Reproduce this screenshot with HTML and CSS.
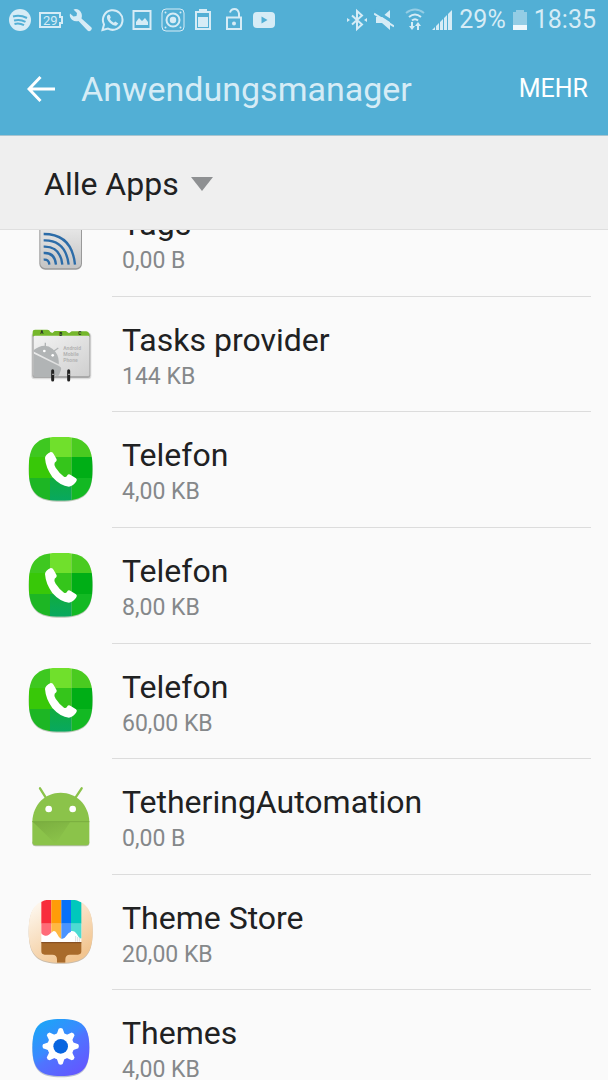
FILE: index.html
```html
<!DOCTYPE html>
<html lang="de">
<head>
<meta charset="utf-8">
<meta name="viewport" content="width=device-width, initial-scale=1">
<title>Anwendungsmanager</title>
<link rel="stylesheet" href="styles.css">
</head>
<body>
<svg width="0" height="0" class="defs" aria-hidden="true">
  <defs>
    <linearGradient id="tag" x2="0" y2="1"><stop offset="0" stop-color="#f4f4f4"/><stop offset="1" stop-color="#c4c4c4"/></linearGradient>
    <linearGradient id="card" x2="1" y2="1"><stop offset="0" stop-color="#f3f3f3"/><stop offset="1" stop-color="#cfcfcf"/></linearGradient>
    <linearGradient id="cream" x2=".6" y2="1"><stop offset="0" stop-color="#fffdf9"/><stop offset="1" stop-color="#f2c590"/></linearGradient>
    <linearGradient id="blue" x2=".7" y2="1"><stop offset="0" stop-color="#14abf5"/><stop offset=".5" stop-color="#3b89ff"/><stop offset=".6" stop-color="#4f74ff"/><stop offset="1" stop-color="#6259ff"/></linearGradient>
    <linearGradient id="teal" x2="0" y2="1"><stop offset="0" stop-color="#10ac40"/><stop offset="1" stop-color="#08a860"/></linearGradient>
    <linearGradient id="fold" x2=".6" y2="1"><stop offset="0" stop-color="#6f9f38"/><stop offset="1" stop-color="#8bc34a"/></linearGradient>
    <path id="squircle" d="M122 26C190 26 218 46 218 122S190 218 122 218 26 198 26 122 54 26 122 26Z"/>
    <clipPath id="clip"><use href="#squircle"/></clipPath>
    <clipPath id="cardclip"><rect x="41" y="60" width="168" height="126" rx="5"/></clipPath>
    <symbol id="phone" viewBox="24 27 198 198">
      <use href="#squircle" y="3" fill="#bcc8b8"/>
      <g clip-path="url(#clip)">
        <path fill="#3ec820" d="M24 24h66v63H24z"/><path fill="#70e02c" d="M90 24h65v63H90z"/><path fill="#4acb20" d="M155 24h65v63h-65z"/>
        <path fill="#38c808" d="M24 87h66v63H24z"/><path fill="#35c51b" d="M90 87h65v63H90z"/><path fill="#00ae16" d="M155 87h65v63h-65z"/>
        <path fill="#1db624" d="M24 150h66v70H24z"/><path fill="url(#teal)" d="M90 150h65v70H90z"/><path fill="#13b923" d="M155 150h65v70h-65z"/>
      </g>
      <path fill="#fff" d="M75 90Q76 80 92 72Q98 71 101 78L110 94Q112 100 104 104Q101 110 107 119Q119 137 132 146Q138 149 141 143Q145 137 151 140L168 151Q173 155 169 160Q160 175 147 176Q121 174 97 147Q77 119 75 90Z"/>
    </symbol>
  </defs>
</svg>

<header class="top">
  <div class="status">
    <div class="notices">
      <svg viewBox="0 0 24 24"><circle cx="12" cy="12" r="11" fill="currentColor"/><path class="cut" d="M5 8.500q7-2 14 1.500M6 12.500q6-1.700 11.500 1.300M6.500 16q5-1.300 9.500 1.200" stroke-width="2"/></svg>
      <svg viewBox="0 0 24 24"><path class="line" d="M1 5h20v4h2v6h-2v4H1z"/><text x="4" y="17" class="tiny">29</text></svg>
      <svg viewBox="0 0 24 24"><path fill="currentColor" d="M22.500 19.500 12.500 10.500Q14 5 10 2 7.500.5 4.500 1.500L8 5 7.500 8 4.500 8.500 1 5.500Q0 9 3 11.800 6 14 9.500 13L18.500 22.500Q20 24 22 22.300 23.500 20.800 22.500 19.500Z"/></svg>
      <svg viewBox="0 0 24 24"><path class="line" d="M2.500 22 4 16.500A9.800 9.800 0 1 1 8 20.600Z"/><path fill="currentColor" d="M8.500 6.500 7 8q-.7 3.500 3 7 3.500 3.200 6.500 2.500l1.800-2-3-2-1.500 1.200q-2.500-1-4-3.700l1-1.200-1-2.800z"/></svg>
      <svg viewBox="0 0 24 24"><rect class="line" x="3.500" y="3" width="17" height="18"/><path fill="currentColor" d="M6 17v-3l3-4 3 3 3-3 3 4v3z"/></svg>
      <svg viewBox="0 0 24 24"><rect class="line thin" x="1" y="1" width="22" height="22" rx="4"/><circle class="line" cx="12" cy="12" r="6.500"/><g fill="currentColor"><circle cx="12" cy="12" r="3.200"/><circle cx="4.500" cy="4.500" r="1"/><circle cx="19.500" cy="4.500" r="1"/><circle cx="4.500" cy="19.500" r="1"/><circle cx="19.500" cy="19.500" r="1"/></g></svg>
      <svg viewBox="0 0 24 24"><path class="line" d="M5 4h14v17H5z"/><path fill="currentColor" d="M8 1h8v3H8zM7 9h10v10H7z"/></svg>
      <svg viewBox="0 0 24 24"><path class="line" d="M5 9.500h14v11.500H5zM8 4.500q1-3.500 4.500-3.500T17 5.500v4"/><circle cx="12" cy="15.500" r="2" fill="currentColor"/></svg>
      <svg viewBox="0 0 24 24"><rect x="1" y="4" width="22" height="16" rx="4" fill="currentColor"/><path fill="#52afd5" d="m9.500 8.500 6 3.500-6 3.500z"/></svg>
    </div>
    <div class="system">
      <svg viewBox="0 0 20 24"><path class="line" d="m5 7.500 10 9-5 4.500V3l5 4.500-10 9"/><path fill="currentColor" d="m0 10 3 2-3 2zm20 0-3 2 3 2z"/></svg>
      <svg viewBox="0 0 20 24"><path fill="currentColor" d="M2 9h6l8-7v20L8 15H2z"/><path d="m1 2.500 20 13" stroke="#52afd5" stroke-width="3"/><path class="line" d="m0 5.500 20 13"/></svg>
      <svg class="wifi" viewBox="0 0 20 24"><path class="line dim" d="M1 5q9-7 18 0"/><path class="line" d="M4 9q6-5 12 0M7 12.500q3-2.500 6 0"/><path fill="currentColor" d="M6 14h2v4h2l-3 4-3-4h2zm6 8v-4h-2l3-4 3 4h-2v4z"/></svg>
      <svg viewBox="0 0 20 24"><path fill="currentColor" d="m0 22 3-3v3zm4-4 3-3v7H4zm4-4 3-3v11H8zm4-4 3-3v15h-3zm4-4 4-4v20h-4z"/></svg>
      <span>29%</span>
      <svg class="battery" viewBox="0 0 14 24"><path fill="currentColor" opacity=".5" d="M0 4h3V2h8v2h3v13H0z"/><path fill="#eff8fc" d="M0 17h14v5H0z"/></svg>
      <time>18:35</time>
    </div>
  </div>
  <div class="bar">
    <button class="back" aria-label="Zurück"><svg viewBox="0 0 28 28"><path d="M13.500 2 2 14l11.500 12M2 14h26" fill="none" stroke="#fff" stroke-width="3"/></svg></button>
    <h1>Anwendungsmanager</h1>
    <button class="more">MEHR</button>
  </div>
</header>

<div class="filter">
  <select aria-label="Filter"><option>Alle Apps</option></select>
  <svg viewBox="0 0 22 14" aria-hidden="true"><path fill="#8e9092" d="M0 0h22L11 14z"/></svg>
</div>

<main>
  <ul class="apps">
    <li>
      <svg viewBox="24 -40 198 198"><rect x="58" y="-20" width="128" height="171" rx="18" fill="#999"/><rect x="61" y="-20" width="122" height="167" rx="15" fill="url(#tag)"/><g fill="none" stroke="#2c6ca8" stroke-width="7"><path d="M71 44Q156 44 165 136M71 63Q137 61 146 136M71 82Q121 80 127 136M71 101Q105 99 108 136M71 121Q87 119 88 136"/></g></svg>
      <div class="text"><h2>Tags</h2><p>0,00 B</p></div>
    </li>
    <li>
      <svg viewBox="24 18 198 198"><rect x="34" y="53" width="180" height="140" rx="10" fill="#ddd"/><rect x="37" y="55" width="174" height="134" rx="7" fill="#a9a9a9"/><path fill="#75b72b" d="M38 64V50q0-6 7-6h37q6 0 9 7l6 3 7-6h34l9 7 8-6h44q7 0 9 8v9z"/><rect x="41" y="62" width="167" height="121" rx="4" fill="url(#card)"/>
        <g clip-path="url(#cardclip)"><path fill="#b1b4b5" d="M37 108Q72 80 98 102 119 120 116 148L37 108ZM39 115l78 38-14 35H39z"/><path d="M76 99V83m26 25 13-9" stroke="#b1b4b5" stroke-width="4"/><circle cx="73" cy="108" r="4" fill="#fff"/><circle cx="98" cy="121" r="4" fill="#fff"/><rect x="106" y="153" width="15" height="30" rx="7" fill="#b1b4b5" transform="rotate(20 113 168)"/></g>
        <g class="card-label"><text x="130" y="106">Android</text><text x="130" y="124">Mobile</text><text x="130" y="141">Phone</text></g><g class="tab-label"><text x="61" y="58">A</text><text x="118" y="62">B</text><text x="175" y="61">C</text></g>
        <g stroke="#222" stroke-width="9" stroke-linecap="round"><path d="M98 167v28m48-28v28"/></g><path d="M96 178h6m42 0h6" stroke="#999" stroke-width="4"/></svg>
      <div class="text"><h2>Tasks provider</h2><p>144 KB</p></div>
    </li>
    <li><svg><use href="#phone"/></svg><div class="text"><h2>Telefon</h2><p>4,00 KB</p></div></li>
    <li><svg><use href="#phone"/></svg><div class="text"><h2>Telefon</h2><p>8,00 KB</p></div></li>
    <li><svg><use href="#phone"/></svg><div class="text"><h2>Telefon</h2><p>60,00 KB</p></div></li>
    <li>
      <svg viewBox="24 11 198 198"><path d="M37 184h171v4q0 10-10 10H47q-10 0-10-10z" fill="#b5bea9"/><path d="m60 24 17 27m108-27-18 27" stroke="#8bc34a" stroke-width="7" stroke-linecap="round"/><path fill="#8bc34a" d="M37 123C39 73 75 37 122 37s84 36 86 86v62q0 10-10 10H47q-10 0-10-10z"/><path fill="url(#fold)" opacity=".6" d="M38 124h113l-44 67z"/><path d="M37 124h171" stroke="#79ad3f" stroke-width="3"/><circle cx="86" cy="86" r="10" fill="#fff"/><circle cx="158" cy="86" r="10" fill="#fff"/></svg>
      <div class="text"><h2>TetheringAutomation</h2><p>0,00 B</p></div>
    </li>
    <li>
      <svg viewBox="24 30 198 198"><use href="#squircle" y="3" fill="#c9bba9"/><use href="#squircle" fill="url(#cream)"/>
        <g clip-path="url(#clip)"><path fill="#fff" d="M64 100h120v57H64z"/><path fill="#f82c3c" d="M64 29h30v72H64z"/><path fill="#ff9c08" d="M94 27h30v74H94z"/><path fill="#0870f8" d="M124 27h29v74h-29z"/><path fill="#00c8bc" d="M153 29h31v72h-31z"/>
        <path fill="#ff6b77" d="M64 101h30v26q-8 12-19 10-8-1-11-7z"/><path fill="#ffb942" d="M94 101h30v46q-7-2-12-14-6-13-13-9l-5 4z"/><path fill="#4b94ff" d="M124 101h29v24q-8 2-15 14-5 9-14 7z"/><path fill="#4cdbd2" d="M153 101h31v44q-6 2-13-12-7-12-18-10z"/><path d="M167 138v17m6-14v14m6-11v11" stroke="#ccc" stroke-width="2"/><path fill="#a96b2b" d="M64 157h120v27q0 10-10 10h-24q-14 0-14 14v14h-25v-14q0-14-14-14H74q-10 0-10-10z"/><path stroke="#7d481d" stroke-width="3" d="M64 158h120"/></g></svg>
      <div class="text"><h2>Theme Store</h2><p>20,00 KB</p></div>
    </li>
    <li>
      <svg viewBox="24 29 198 198"><g transform="translate(14 18) scale(.89)"><use href="#squircle" y="4" fill="#bcc3d2"/><use href="#squircle" fill="url(#blue)"/></g>
        <g transform="translate(122 123)" fill="#fff"><circle r="40"/><g id="teeth"><path id="tooth" d="M-12-36-6-53Q0-57 6-53L12-36v72L6 53Q0 57-6 53l-6-17z"/><use href="#tooth" transform="rotate(90)"/></g><use href="#teeth" transform="rotate(45)"/><circle r="22" fill="#0865e0"/></g></svg>
      <div class="text"><h2>Themes</h2><p>4,00 KB</p></div>
    </li>
  </ul>
</main>
</body>
</html>
```
FILE: styles.css
```css
* { box-sizing: border-box; margin: 0; padding: 0; }
body {
  height: 100vh;
  display: flex;
  flex-direction: column;
  overflow: hidden;
  background: #fafafa;
  color: #202122;
  font-family: Roboto, "Liberation Sans", sans-serif;
}
svg { display: block; flex: none; }
button, select { border: 0; background: none; font: inherit; color: inherit; appearance: none; }
.defs { position: absolute; }

.top { flex: none; background: #52afd5; border-bottom: 1px solid #a9c4cf; }
.status {
  height: 40px;
  padding: 0 12px 0 8px;
  display: flex;
  align-items: center;
  justify-content: space-between;
  color: #d6ecf6;
  font-size: 25px;
  line-height: 40px;
}
.notices { flex: 0 1 268px; display: flex; justify-content: space-between; }
.notices svg { width: 24px; height: 24px; }
.system { display: flex; align-items: center; gap: 7px; }
.system svg { width: 20px; height: 24px; }
.system .wifi { margin-left: 4px; }
.system .battery { width: 14px; }
.line { fill: none; stroke: currentColor; stroke-width: 2; }
.thin { stroke-width: 1; }
.dim { opacity: .5; }
.cut { fill: none; stroke: #52afd5; }
.tiny { font-size: 13px; fill: currentColor; }

.bar { height: 95px; padding: 2px 20px 0 27px; display: flex; align-items: center; color: #fff; }
.back svg { width: 28px; height: 28px; }
.bar h1 { flex: 1; margin-left: 26px; font-size: 34px; font-weight: 400; line-height: 40px; color: #d6ecf6; }
.more { font-size: 25px; line-height: 40px; }

.filter {
  flex: none;
  height: 94px;
  padding: 2px 0 0 44px;
  display: flex;
  align-items: center;
  gap: 12px;
  background: #efefef;
  border-bottom: 1px solid #dfdfdf;
}
.filter select { font-size: 32px; line-height: 40px; }
.filter svg { width: 22px; height: 14px; }

main { flex: 1; min-height: 0; overflow: hidden; }
.apps {
  min-height: 925px;
  margin-top: -49px;
  display: grid;
  grid-auto-rows: 1fr;
  list-style: none;
}
.apps li { padding: 0 17px 0 28px; display: flex; gap: 18px; align-items: center; }
.apps svg { width: 66px; height: 66px; }
.text {
  flex: 1;
  align-self: stretch;
  padding: 23px 0 0 10px;
  border-bottom: 1px solid #dcdcdc;
}
.text h2 { font-size: 32px; font-weight: 400; line-height: 40px; }
.text p { margin-top: 1px; font-size: 23px; line-height: 32px; color: #85888a; }
.card-label { font-size: 15px; font-weight: 700; fill: #b4b4b4; }
.tab-label { font-size: 14px; font-weight: 700; fill: #222; }
```
